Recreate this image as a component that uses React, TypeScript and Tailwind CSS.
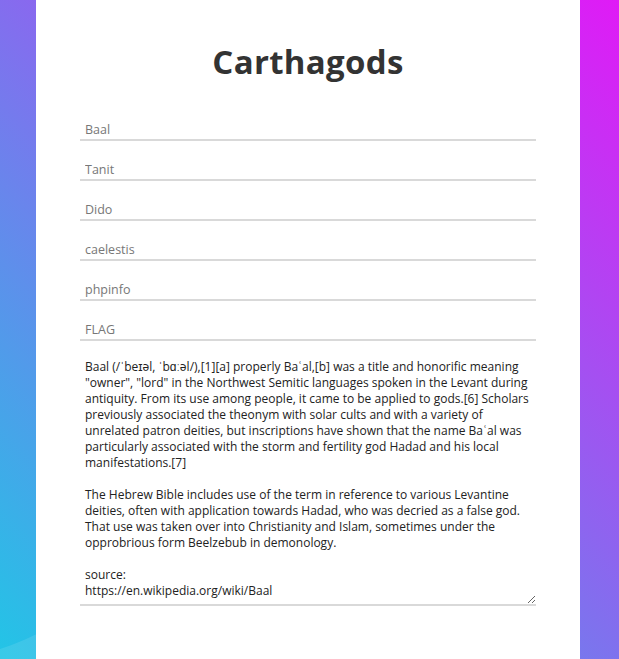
import { useState } from 'react';

const gods = ['Baal', 'Tanit', 'Dido', 'caelestis', 'phpinfo', 'FLAG'];

const article = `Baal (/ˈbeɪəl, ˈbɑːəl/),[1][a] properly Baʿal,[b] was a title and honorific meaning
"owner", "lord" in the Northwest Semitic languages spoken in the Levant during
antiquity. From its use among people, it came to be applied to gods.[6] Scholars
previously associated the theonym with solar cults and with a variety of
unrelated patron deities, but inscriptions have shown that the name Baʿal was
particularly associated with the storm and fertility god Hadad and his local
manifestations.[7]

The Hebrew Bible includes use of the term in reference to various Levantine
deities, often with application towards Hadad, who was decried as a false god.
That use was taken over into Christianity and Islam, sometimes under the
opprobrious form Beelzebub in demonology.

source:
https://en.wikipedia.org/wiki/Baal`;

export default function App() {
  const [text, setText] = useState(article);

  return (
    <div className="relative h-[659px] overflow-hidden bg-[linear-gradient(45deg,#22c5e6,#e01af6)] font-['Open_Sans',sans-serif]">
      {/* faint wave in the corner */}
      <svg
        className="absolute bottom-0 left-0"
        width="80"
        height="40"
        viewBox="0 0 80 40"
      >
        <path d="M0 40 L0 30 Q 25 22 50 8 L 80 0 L80 40 Z" fill="#ffffff" fillOpacity="0.1" />
      </svg>

      <div className="relative ml-[36px] flex h-full w-[544px] flex-col bg-white px-[44px] pt-[42px]">
        <h1 className="text-center text-[33px] font-bold leading-[40px] tracking-[0.3px] text-[#333]">
          Carthagods
        </h1>

        <div className="mt-[19px] flex flex-col">
          {gods.map((name) => (
            <input
              key={name}
              type="text"
              placeholder={name}
              className="mt-[18px] h-[22px] w-full border-0 border-b-2 border-[#d9d9d9] px-[5px] text-[12.5px] text-[#333] outline-none placeholder:text-[#777]"
            />
          ))}
        </div>

        <textarea
          wrap="off"
          value={text}
          onChange={(e) => setText(e.target.value)}
          className="mt-[13px] h-[252px] w-full overflow-hidden border-0 border-b-2 border-[#d9d9d9] px-[5px] pt-[5px] text-[12px] leading-[16px] text-[#222] outline-none"
        />
      </div>
    </div>
  );
}
